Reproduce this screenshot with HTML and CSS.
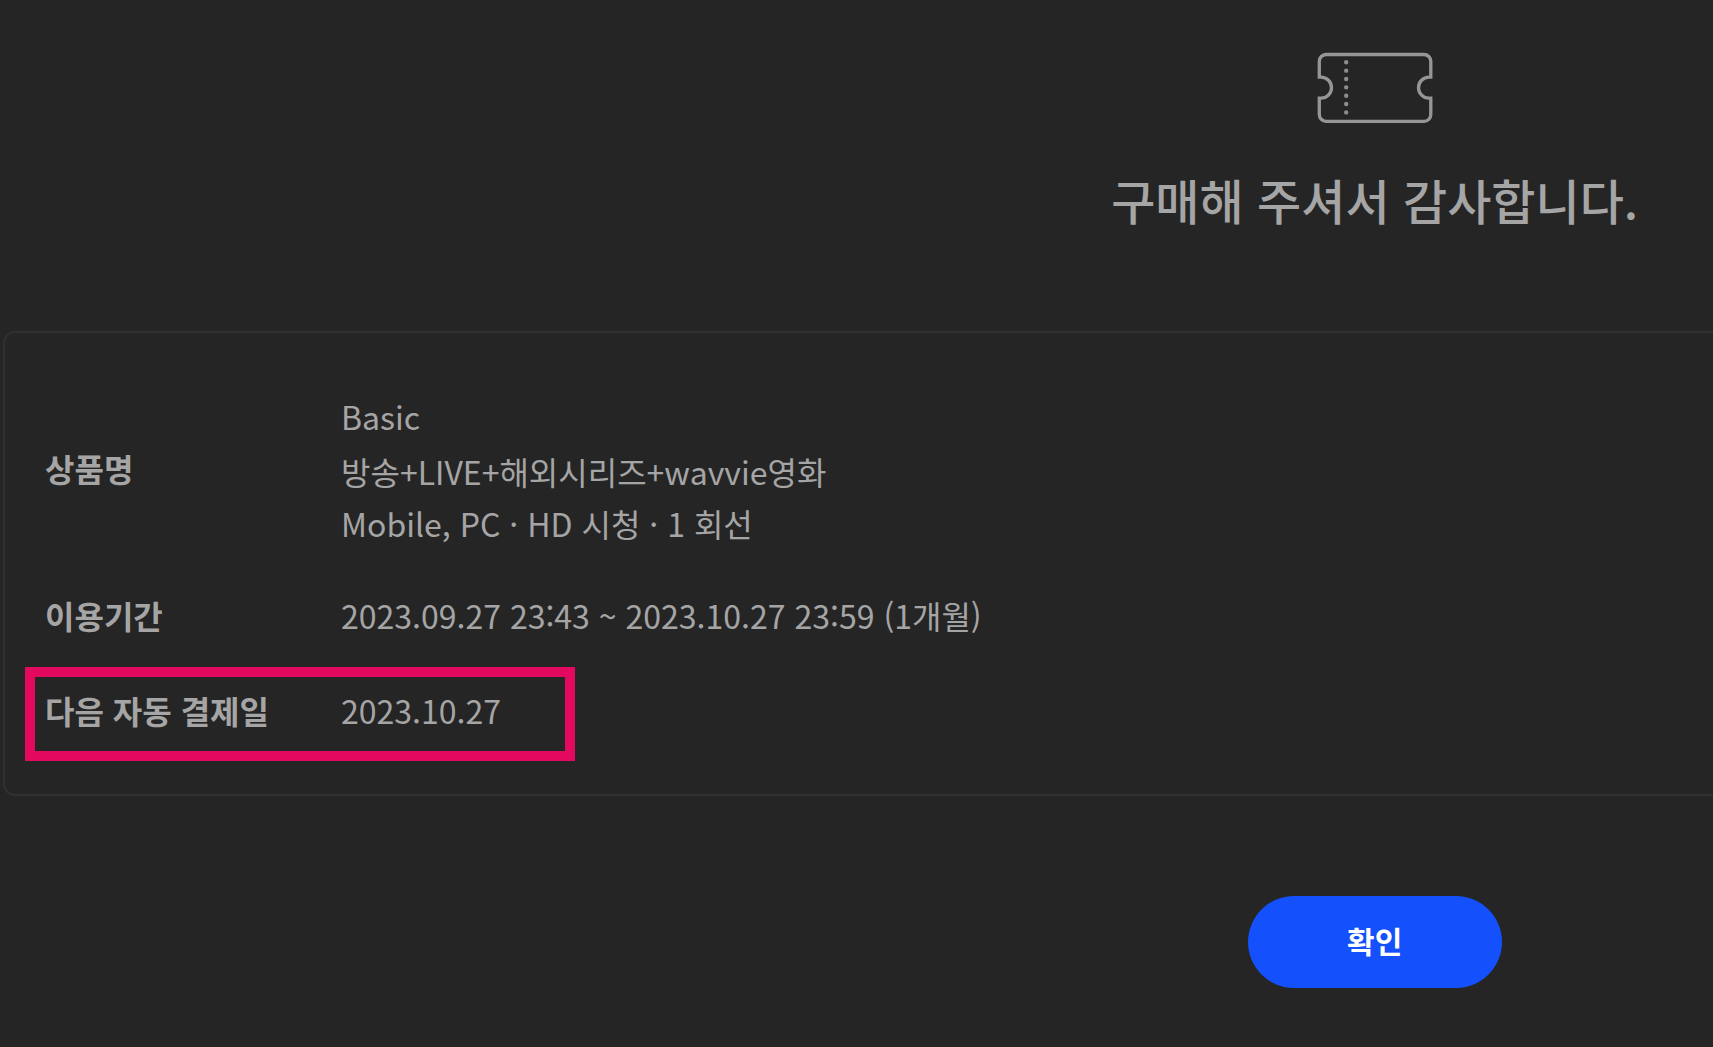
FILE: index.html
```html
<!DOCTYPE html>
<html lang="ko">
<head>
<meta charset="utf-8">
<meta name="viewport" content="width=device-width, initial-scale=1">
<title>구매 완료</title>
<link rel="stylesheet" href="styles.css">
</head>
<body>
<main class="page">
  <header class="intro">
    <svg class="ticket" viewBox="0 0 120 72" fill="none" aria-hidden="true">
      <path d="M11 2.500H109A6.800 6.800 0 0 1 115.800 9.300V25.200H114A10.500 10.500 0 0 0 114 46.200H115.800V62.500A6.800 6.800 0 0 1 109 69.300H11A6.800 6.800 0 0 1 4.300 62.500V46.200H6A10.500 10.500 0 0 0 6 25.200H4.300V9.300A6.800 6.800 0 0 1 11 2.500Z" stroke="#969696" stroke-width="3.300"/>
      <path d="M31.200 10.300V61" stroke="#8c8c8c" stroke-width="4.400" stroke-linecap="round" stroke-dasharray="0 8.350"/>
    </svg>
    <h1 class="title">구매해 주셔서 감사합니다.</h1>
  </header>
  <section class="summary">
    <table class="details">
      <tbody>
        <tr>
          <th scope="row">상품명</th>
          <td>
            <p class="plan">Basic</p>
            <p>방송+LIVE+해외시리즈+wavvie영화</p>
            <p>Mobile, PC · HD 시청 · 1 회선</p>
          </td>
        </tr>
        <tr>
          <th scope="row">이용기간</th>
          <td>2023.09.27 23:43 ~ 2023.10.27 23:59 (1개월)</td>
        </tr>
        <tr class="next-payment">
          <th scope="row">다음 자동 결제일</th>
          <td>2023.10.27</td>
        </tr>
      </tbody>
    </table>
  </section>
  <button class="confirm" type="button">확인</button>
</main>
</body>
</html>
```
FILE: styles.css
```css
*,
*::before {
  box-sizing: border-box;
}

html {
  background: #252525;
  overflow: hidden;
}

body {
  margin: 0;
  overflow: hidden;
  color: #a5a5a5;
  font-family: "Noto Sans CJK KR", sans-serif;
  font-size: 32px;
  line-height: 52px;
}

p {
  margin: 0;
}

/* The sheet is wider than the window and runs off its right edge. */
.page {
  display: flex;
  flex-direction: column;
  align-items: center;
  width: 160.5%;
  padding: 52px 3px;
}

.intro {
  display: flex;
  flex-direction: column;
  align-items: center;
  gap: 40px;
}

.ticket {
  width: 120px;
  height: 72px;
}

.title {
  margin: 0;
  font-size: 48px;
  font-weight: 500;
  line-height: 70px;
}

.summary {
  width: 100%;
  margin: 97px 0 100px;
  padding: 37px 40px 38px;
  border: 2px solid #303030;
  border-radius: 12px;
}

.details {
  border-collapse: collapse;
  text-align: left;
}

.details th,
.details td {
  padding: 20px 0;
  vertical-align: middle;
}

.details th {
  width: 296px;
  font-weight: 700;
}

.details tr:first-child th {
  padding-bottom: 24px;
}

.plan {
  margin-bottom: 3px;
}

.details .next-payment th,
.details .next-payment td {
  padding-top: 23px;
}

.next-payment th {
  position: relative;
}

/* Marker frame drawn over the payment date row. */
.next-payment th::before {
  content: "";
  position: absolute;
  top: 6px;
  left: -20px;
  width: 550px;
  height: 94px;
  border: 10px solid #e3095e;
}

.confirm {
  width: 254px;
  height: 92px;
  padding: 0 0 4px;
  border: 0;
  border-radius: 46px;
  background: #1451fc;
  color: #fff;
  font-family: inherit;
  font-size: 30px;
  font-weight: 700;
  line-height: 44px;
}
```
